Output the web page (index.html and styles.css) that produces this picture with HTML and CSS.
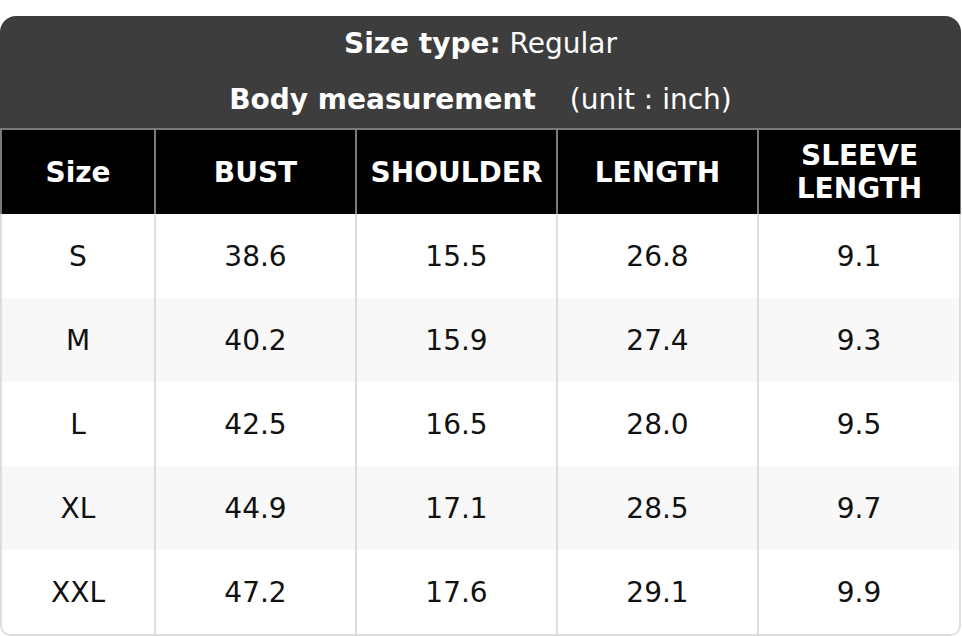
FILE: index.html
```html
<!DOCTYPE html>
<html>
<head>
<meta charset="utf-8">
<link rel="stylesheet" href="styles.css">
</head>
<body>
<div class="chart">
  <div class="title">
    <div class="title-line"><b>Size type:</b> Regular</div>
    <div class="title-line"><b>Body measurement</b><span class="unit">(unit : inch)</span></div>
  </div>
  <table class="sizes">
    <colgroup>
      <col class="c-size"><col class="c-val"><col class="c-val"><col class="c-val"><col class="c-last">
    </colgroup>
    <thead>
      <tr><th>Size</th><th>BUST</th><th>SHOULDER</th><th>LENGTH</th><th>SLEEVE<br>LENGTH</th></tr>
    </thead>
    <tbody>
      <tr><td>S</td><td>38.6</td><td>15.5</td><td>26.8</td><td>9.1</td></tr>
      <tr><td>M</td><td>40.2</td><td>15.9</td><td>27.4</td><td>9.3</td></tr>
      <tr><td>L</td><td>42.5</td><td>16.5</td><td>28.0</td><td>9.5</td></tr>
      <tr><td>XL</td><td>44.9</td><td>17.1</td><td>28.5</td><td>9.7</td></tr>
      <tr><td>XXL</td><td>47.2</td><td>17.6</td><td>29.1</td><td>9.9</td></tr>
    </tbody>
  </table>
</div>
</body>
</html>
```
FILE: styles.css
```css
html, body {
  margin: 0;
  padding: 0;
  background: #ffffff;
}
body {
  font-family: "DejaVu Sans", sans-serif;
  font-size: 28px;
  color: #111111;
}
.chart {
  margin-top: 16px;
  width: 961px;
  border-radius: 16px 16px 10px 10px;
  overflow: hidden;
}
.title {
  background: #3d3d3d;
  color: #ffffff;
  text-align: center;
}
.title-line {
  height: 56px;
  line-height: 56px;
}
.unit {
  margin-left: 34px;
}
.sizes {
  width: 961px;
  table-layout: fixed;
  border-collapse: separate;
  border-spacing: 0;
}
.c-size { width: 154px; }
.c-val { width: 201px; }
.c-last { width: 204px; }
.sizes th {
  background: #000000;
  color: #ffffff;
  font-weight: bold;
  height: 86px;
  padding: 0 4px;
  box-sizing: border-box;
  line-height: 33px;
  border-top: 2px solid #7a7a7a;
  border-left: 2px solid #7a7a7a;
}
.sizes th:last-child {
  border-right: 1px solid #7a7a7a;
}
.sizes td {
  height: 84px;
  padding: 0;
  box-sizing: border-box;
  text-align: center;
  border-left: 2px solid #dddddd;
}
.sizes td:last-child {
  border-right: 2px solid #dddddd;
}
.sizes tbody tr:nth-child(even) td {
  background: #f8f8f8;
}
.sizes tbody tr:last-child td {
  height: 86px;
  border-bottom: 2px solid #dddddd;
}
.sizes tbody tr:last-child td:first-child {
  border-bottom-left-radius: 10px;
}
.sizes tbody tr:last-child td:last-child {
  border-bottom-right-radius: 10px;
}
```
